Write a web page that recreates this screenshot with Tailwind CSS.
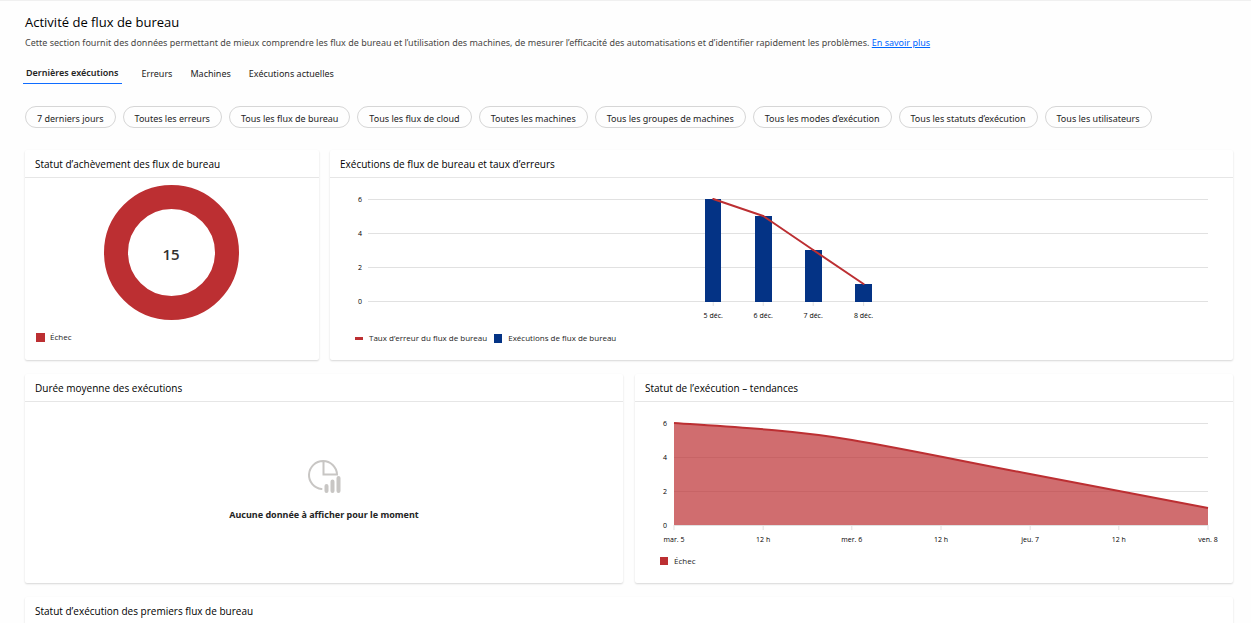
<!DOCTYPE html>
<html lang="fr">
<head>
<meta charset="utf-8">
<meta name="viewport" content="width=device-width, initial-scale=1">
<title>Activité de flux de bureau</title>
<script src="https://cdn.jsdelivr.net/npm/@tailwindcss/browser@4"></script>
</head>
<body class="h-screen overflow-hidden border-t border-[#f0f0f0] bg-[#fefefe] pl-[25px] pr-[18px] font-['Noto_Sans','Open_Sans',sans-serif] text-[9px] leading-4 text-[#242424]">
<header class="pt-[11px]">
  <h1 class="font-['Open_Sans'] text-[13px] leading-5 font-medium text-black">Activité de flux de bureau</h1>
  <p class="mt-[3px] whitespace-nowrap text-[#484644]">Cette section fournit des données permettant de mieux comprendre les flux de bureau et l’utilisation des machines, de mesurer l’efficacité des automatisations et d’identifier rapidement les problèmes. <a href="#" class="text-[#0066ff] underline">En savoir plus</a></p>
</header>

<nav role="tablist" aria-label="Activité" class="-ml-0.5 mt-[11px] flex h-[22px] items-stretch gap-[14px]">
  <button role="tab" aria-selected="true" class="mr-1 border-b border-[#0f6cff] px-[3px] font-semibold">Dernières exécutions</button>
  <button role="tab" aria-selected="false" class="px-0.5 pt-px">Erreurs</button>
  <button role="tab" aria-selected="false" class="px-0.5 pt-px">Machines</button>
  <button role="tab" aria-selected="false" class="px-0.5 pt-px">Exécutions actuelles</button>
</nav>

<div class="mt-[22px] flex flex-wrap gap-[7px] whitespace-nowrap">
  <button class="h-[22px] rounded-full border border-[#d6d6d6] px-[11px] pt-[3px]">7 derniers jours</button>
  <button class="h-[22px] rounded-full border border-[#d6d6d6] px-[11px] pt-[3px]">Toutes les erreurs</button>
  <button class="h-[22px] rounded-full border border-[#d6d6d6] px-[11px] pt-[3px]">Tous les flux de bureau</button>
  <button class="h-[22px] rounded-full border border-[#d6d6d6] px-[11px] pt-[3px]">Tous les flux de cloud</button>
  <button class="h-[22px] rounded-full border border-[#d6d6d6] px-[11px] pt-[3px]">Toutes les machines</button>
  <button class="h-[22px] rounded-full border border-[#d6d6d6] px-[11px] pt-[3px]">Tous les groupes de machines</button>
  <button class="h-[22px] rounded-full border border-[#d6d6d6] px-[11px] pt-[3px]">Tous les modes d’exécution</button>
  <button class="h-[22px] rounded-full border border-[#d6d6d6] px-[11px] pt-[3px]">Tous les statuts d’exécution</button>
  <button class="h-[22px] rounded-full border border-[#d6d6d6] px-[11px] pt-[3px]">Tous les utilisateurs</button>
</div>

<main class="mt-[22px] flex flex-col gap-[14px]">
  <div class="flex gap-[11px]">
    <section class="w-[294px] shrink-0 rounded-xs bg-white pb-[14px] shadow-[0_1px_2px_rgba(0,0,0,0.16)]">
      <h2 class="h-7 border-b border-[#e6e6e6] px-[10px] pt-1.5 font-['Open_Sans'] text-[10px] font-medium text-black">Statut d’achèvement des flux de bureau</h2>
      <svg viewBox="0 0 136 136" class="mx-auto mt-[7px] block size-[136px]" role="img" aria-label="Échec : 15">
        <circle cx="67.500" cy="67.500" r="55.5" fill="none" stroke="#bc2f32" stroke-width="24"/>
        <text x="67" y="75" text-anchor="middle" class="fill-[#323130] font-['Open_Sans'] text-[15px] font-semibold">15</text>
      </svg>
      <div class="mt-2 flex items-center gap-[5px] px-[11px] font-['Open_Sans'] text-[8px]"><span class="size-[9px] bg-[#bc2f32]"></span>Échec</div>
    </section>

    <section class="min-w-0 grow rounded-xs bg-white pb-[14px] shadow-[0_1px_2px_rgba(0,0,0,0.16)]">
      <h2 class="h-7 border-b border-[#e6e6e6] px-[10px] pt-1.5 font-['Open_Sans'] text-[10px] font-medium text-black">Exécutions de flux de bureau et taux d’erreurs</h2>
      <div class="mt-[21px] pl-[38px] pr-[25px]">
        <svg class="block h-[122px] w-full overflow-visible font-['Open_Sans'] text-[7px]" role="img" aria-label="Exécutions et taux d’erreurs par jour">
          <g stroke="#e1e1e1">
            <line x1="0" x2="100%" y1="0.5" y2="0.5"/><line x1="0" x2="100%" y1="34.5" y2="34.5"/><line x1="0" x2="100%" y1="68.5" y2="68.5"/><line x1="0" x2="100%" y1="102.5" y2="102.5"/>
            <line x1="41.1%" x2="41.1%" y1="102" y2="107"/><line x1="47.05%" x2="47.05%" y1="102" y2="107"/><line x1="53%" x2="53%" y1="102" y2="107"/><line x1="59%" x2="59%" y1="102" y2="107"/>
          </g>
          <g fill="#043385" shape-rendering="crispEdges">
            <rect x="40.1%" width="1.98%" y="0" height="103"/><rect x="46.07%" width="2.02%" y="17" height="86"/><rect x="52.02%" width="2.02%" y="51" height="52"/><rect x="58%" width="1.98%" y="85" height="18"/>
          </g>
          <g stroke="#bc2f32" stroke-width="2" stroke-linecap="round">
            <line x1="41.1%" y1="0" x2="47.05%" y2="17"/><line x1="47.05%" y1="17" x2="53%" y2="51"/><line x1="53%" y1="51" x2="59%" y2="85"/>
          </g>
          <g fill="#000000" text-anchor="end"><text x="-6" y="3">6</text><text x="-6" y="37">4</text><text x="-6" y="71">2</text><text x="-6" y="105">0</text></g>
          <g fill="#000000" text-anchor="middle"><text x="41.1%" y="119">5 déc.</text><text x="47.05%" y="119">6 déc.</text><text x="53%" y="119">7 déc.</text><text x="59%" y="119">8 déc.</text></g>
        </svg>
      </div>
      <div class="mt-[9px] flex items-center px-[25px] font-['Open_Sans'] text-[8px]">
        <span class="mr-[6px] h-[3px] w-2 bg-[#bc2f32]"></span>Taux d’erreur du flux de bureau
        <span class="mr-[6px] ml-[7px] h-[9px] w-2 bg-[#043385]"></span>Exécutions de flux de bureau
      </div>
    </section>
  </div>

  <div class="grid grid-cols-2 gap-3">
    <section class="flex flex-col rounded-xs bg-white shadow-[0_1px_2px_rgba(0,0,0,0.16)]">
      <h2 class="h-7 border-b border-[#e6e6e6] px-[10px] pt-1.5 font-['Open_Sans'] text-[10px] font-medium text-black">Durée moyenne des exécutions</h2>
      <div class="flex grow flex-col items-center justify-center gap-[13px] pb-[3px]">
        <svg viewBox="0 0 34 34" class="size-[34px]" fill="none" stroke="#c8c6c4" stroke-width="2" stroke-linecap="round" aria-hidden="true">
          <path d="M14.500 29A14 14 0 1 1 30 14.500H16.500V2"/>
          <path stroke-width="4" d="M19.500 26v5M25.500 21.500v9.500M31.500 18v13"/>
        </svg>
        <p class="font-bold">Aucune donnée à afficher pour le moment</p>
      </div>
    </section>

    <section class="min-w-0 rounded-xs bg-white pb-[14px] shadow-[0_1px_2px_rgba(0,0,0,0.16)]">
      <h2 class="h-7 border-b border-[#e6e6e6] px-[10px] pt-1.5 font-['Open_Sans'] text-[10px] font-medium text-black">Statut de l’exécution – tendances</h2>
      <div class="mt-[21px] pl-[39px] pr-[25px]">
        <svg class="block h-[122px] w-full overflow-visible font-['Open_Sans'] text-[7px]" role="img" aria-label="Échecs du 5 au 8 décembre">
          <g stroke="#e1e1e1">
            <line x1="0" x2="100%" y1="0.5" y2="0.5"/><line x1="0" x2="100%" y1="34.5" y2="34.5"/><line x1="0" x2="100%" y1="68.5" y2="68.5"/><line x1="0" x2="100%" y1="102.5" y2="102.5"/>
            <line x1="0" x2="0" y1="102" y2="107"/><line x1="16.7%" x2="16.7%" y1="102" y2="107"/><line x1="33.3%" x2="33.3%" y1="102" y2="107"/><line x1="50%" x2="50%" y1="102" y2="107"/><line x1="66.7%" x2="66.7%" y1="102" y2="107"/><line x1="83.3%" x2="83.3%" y1="102" y2="107"/><line x1="100%" x2="100%" y1="102" y2="107"/>
          </g>
          <svg width="100%" height="102" viewBox="0 0 534 102" preserveAspectRatio="none" overflow="visible">
            <path fill="#bc2f32" fill-opacity="0.7" d="M0 0C59 4 119 7 178 17S297 40 356 51S475 74 534 85V102H0Z"/>
            <path fill="none" stroke="#bc2f32" stroke-width="2" vector-effect="non-scaling-stroke" d="M0 0C59 4 119 7 178 17S297 40 356 51S475 74 534 85"/>
          </svg>
          <g fill="#000000" text-anchor="end"><text x="-7" y="3">6</text><text x="-7" y="37">4</text><text x="-7" y="71">2</text><text x="-7" y="105">0</text></g>
          <g fill="#000000" text-anchor="middle"><text x="0" y="119">mar. 5</text><text x="16.7%" y="119">12 h</text><text x="33.3%" y="119">mer. 6</text><text x="50%" y="119">12 h</text><text x="66.7%" y="119">jeu. 7</text><text x="83.3%" y="119">12 h</text><text x="100%" y="119">ven. 8</text></g>
        </svg>
      </div>
      <div class="mt-2 flex items-center gap-[6px] px-[25px] font-['Open_Sans'] text-[8px]"><span class="size-2 bg-[#bc2f32]"></span>Échec</div>
    </section>
  </div>

  <section class="rounded-xs bg-white shadow-[0_1px_2px_rgba(0,0,0,0.16)]">
    <h2 class="h-7 border-b border-[#e6e6e6] px-[10px] pt-1.5 font-['Open_Sans'] text-[10px] font-medium text-black">Statut d’exécution des premiers flux de bureau</h2>
  </section>
</main>
</body>
</html>
